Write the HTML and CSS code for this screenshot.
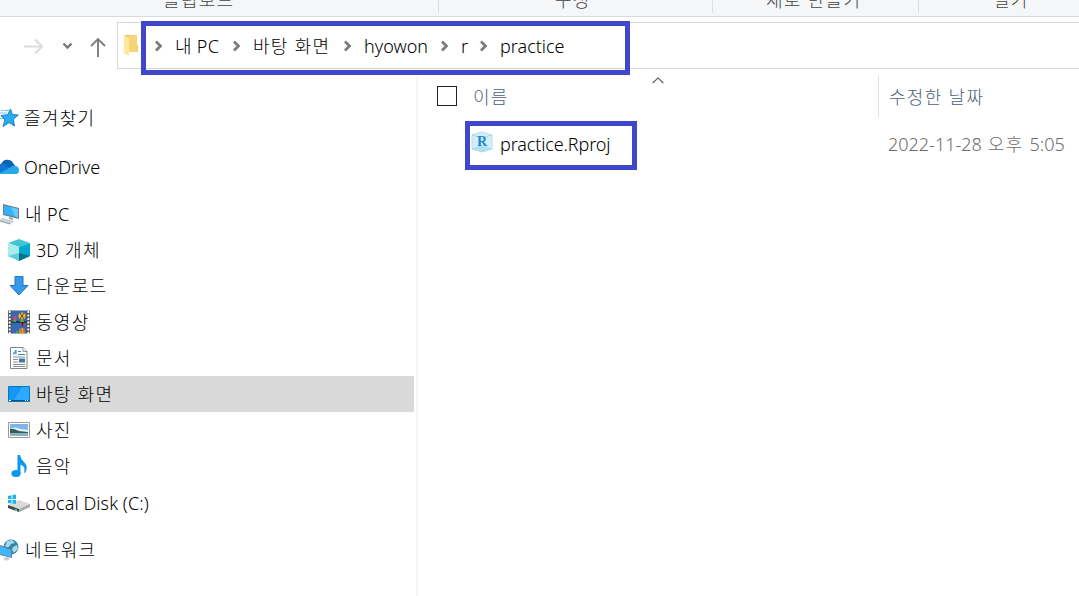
FILE: index.html
```html
<!DOCTYPE html>
<html lang="ko">
<head>
<meta charset="utf-8">
<title>practice</title>
<link rel="stylesheet" href="styles.css">
</head>
<body>
<div class="window">
  <header class="ribbon">
    <div class="group clip"><span class="ko">클립보드</span></div>
    <div class="group organize"><span class="ko">구성</span></div>
    <div class="group create"><span class="ko">새로 만들기</span></div>
    <div class="group open"><span class="ko">열기</span></div>
  </header>
  <nav class="toolbar">
    <svg class="nav" width="117" height="48" viewBox="0 0 117 48" fill="none">
      <path d="M24 24.500H42M35 17.500l7 7-7 7" stroke="#dcdcdc" stroke-width="2.200"/>
      <path d="M63.500 21.500l4 4 4-4" stroke="#777" stroke-width="2.400"/>
      <path d="M98 35V17M91 24l7-7 7 7" stroke="#7d7d7d" stroke-width="1.900"/>
    </svg>
    <div class="address">
      <svg class="folder" width="15" height="22" viewBox="0 0 15 22"><path d="M0 1h13v10h1v7H3z" fill="#efc866"/><path d="M5 1h8v17H5z" fill="#f6d477"/><path d="M0 1l5 3v18l-5-3z" fill="#ffe79e"/></svg>
      <div class="crumbs">
        <svg class="chev" viewBox="0 0 9 12"><path d="M2 1.500L6.500 6 2 10.500"/></svg><span class="c1">내 PC</span>
        <svg class="chev" viewBox="0 0 9 12"><path d="M2 1.500L6.500 6 2 10.500"/></svg><span class="c2 ko">바탕 화면</span>
        <svg class="chev" viewBox="0 0 9 12"><path d="M2 1.500L6.500 6 2 10.500"/></svg><span class="c3">hyowon</span>
        <svg class="chev" viewBox="0 0 9 12"><path d="M2 1.500L6.500 6 2 10.500"/></svg><span class="c4">r</span>
        <svg class="chev" viewBox="0 0 9 12"><path d="M2 1.500L6.500 6 2 10.500"/></svg><span class="c5">practice</span>
      </div>
    </div>
  </nav>
  <div class="content">
    <aside class="sidebar">
      <div class="row root fav"><svg width="19" height="22" viewBox="0 0 19 22"><path d="M10.500 2l1.800 5.500 6 .5-5 4.300 1.200 6.700-5.300-3.400L3 19.500l2-6.500L1 8.500l6.800-.8z" fill="#29aaf3" stroke="#1683c9"/><path d="M1 3.500h8M0 6h7M0 11.500h3" stroke="#73c5f3"/></svg><span class="ko">즐겨찾기</span></div>
      <div class="row root one"><svg width="19" height="18" viewBox="0 0 19 18"><path d="M1 7a6.500 6.500 0 0 1 12-2l3 4-8 4z" fill="#0864b8"/><path d="M0 6q4-1 8 3l6 4-14 3z" fill="#0f78d4"/><path d="M0 15l11-6q2-2 5-1 3 1 3 4 0 4-3 4H0z" fill="#28a8ea"/></svg><span class="tight">OneDrive</span></div>
      <div class="row root pc"><svg width="19" height="22" viewBox="0 0 19 22"><path d="M3 1l16 4v11L3 12z" fill="#687f91"/><path d="M4 2.500l14 3.500v8.500L4 11z" fill="#35b2fa"/><path d="M11 4l7 2v8.500l-3-1z" fill="#68c9ff"/><path d="M9 14l4 1v2l-4-1z" fill="#9aa7b0"/><path d="M0 16l3-1 11 3-3 3L0 18z" fill="#cbd3d8"/><path d="M0 18l10 3" stroke="#8b989f"/></svg><span class="mixed-pc">내 PC</span></div>
      <div class="row"><svg width="22" height="22" viewBox="0 0 22 22"><path d="M0 4L11 0l11 4-11 4z" fill="#43c4d1"/><path d="M0 4l11 4v14L0 17z" fill="#a9edef"/><path d="M11 8l11-4v13l-11 5z" fill="#04a9cf"/><path d="M11 14l11 3-11 5z" fill="#08728b"/><path d="M0 17l11-3v8z" fill="#5fced8"/></svg><span>3D<span class="ko"> 개체</span></span></div>
      <div class="row"><svg width="22" height="22" viewBox="0 0 22 22"><path d="M7 1.500h8v9h5l-9 9.500-9-9.500h5z" fill="#3998e9" stroke="#1979cc"/></svg><span class="ko">다운로드</span></div>
      <div class="row"><svg width="22" height="24" viewBox="0 0 22 24"><path d="M0 .5h22v23H0z" fill="#555"/><path d="M3.500 1h15v10.500h-15zM3.500 12.500h15V23h-15z" fill="#3269bd"/><path d="M3.500 12h15" stroke="#111"/><path d="M1.700 1v23M20.300 1v23" stroke="#fff" stroke-width="1.800" stroke-dasharray="2 1.500"/><circle cx="14" cy="6" r="3.500" fill="#ecbf26"/><path d="M12 3l4 6m0-6l-4 6" stroke="#7b3c2a"/><circle cx="7" cy="8" r="2" fill="#d94b55"/><path d="M5 11h3M12 11h4M8 22h2" stroke="#52a14c" stroke-width="2"/><path d="M11.500 13h6l-3 4z" fill="#c94838"/><path d="M13.500 13h2l-1 4z" fill="#222"/><circle cx="14" cy="21" r="3" fill="#e5a929"/><path d="M13 18.500v4m3-4v4" stroke="#bb3a40"/></svg><span class="ko">동영상</span></div>
      <div class="row"><svg width="22" height="22" viewBox="0 0 22 22"><path d="M2.500.5H15l4 4v17H2.500z" fill="#fff" stroke="#858585"/><path d="M15 .5v4h4" fill="#eee" stroke="#999"/><path d="M5 7.500L8 3v4.500M5.500 6H8M10 4.500h3M10 7.500h7" stroke="#288bc8" fill="none"/><path d="M5 10h12M5 12.500h5M5 15h5M5 17.500h12M5 19.500h12" stroke="#87929a"/><path d="M11 11.500h6v4h-6z" fill="#4578a5"/></svg><span class="ko">문서</span></div>
      <div class="row selected"><svg width="22" height="16" viewBox="0 0 22 16"><path d="M.5.5h21v15H.5z" fill="#1598f3" stroke="#0878bd"/><path d="M14 1h7v13H6z" fill="#2da9ff"/><path d="M1 14.500h20" stroke="#064e82"/><path d="M1 14.500h2M17 14.500h1M19 14.500h1" stroke="#fff"/></svg><span class="ko">바탕 화면</span></div>
      <div class="row"><svg width="22" height="16" viewBox="0 0 22 16"><path d="M.5.5h21v15H.5z" fill="#fff" stroke="#9a9a9a"/><path d="M2 2h18v12H2z" fill="#7eb5e9"/><path d="M2 7q6-3 10 0l8 1v2H2z" fill="#e4f1f7"/><path d="M2 7l4 0 5 2 9 1v2H2z" fill="#315f5d"/><path d="M2 11h18v3H2z" fill="#8aafbd"/></svg><span class="ko">사진</span></div>
      <div class="row"><svg width="22" height="22" viewBox="0 0 22 22"><ellipse cx="8" cy="18.500" rx="4.600" ry="3.500" fill="#0997ef"/><path d="M9.500 18.500V0h2.500q.5 4 4 7 5 5 1 11l-1-.5q2-6-3.500-8v9z" fill="#0997ef"/></svg><span class="ko">음악</span></div>
      <div class="row disk"><svg width="22" height="20" viewBox="0 0 22 20"><path d="M0 12l11-5 11 4-11 5z" fill="#d9d9d9"/><path d="M0 12l11 4v3L0 15z" fill="#434546"/><path d="M11 16l11-5v3l-11 5z" fill="#a7a7a7"/><path d="M7 16.500l2 .7" stroke="#44ec6e" stroke-width="1.500"/><path d="M0 3l3.500-.7V6H0zM4.500 2L8 1.500V6H4.500zM0 7h3.500v3.500L0 10zM4.500 7H8v4l-3.500-.4z" fill="#16b5f1"/></svg><span class="loose">Local Disk (C:)</span></div>
      <div class="row root network"><svg width="19" height="22" viewBox="0 0 19 22"><circle cx="11" cy="8" r="7.500" fill="#3284ad"/><path d="M7 2l5-1 3 3-4 1-2 3-4 0zM13 8l4-2 1 4-4 4-2-3z" fill="#a5d9e8"/><path d="M0 6l12 4v9L0 16z" fill="#607d94"/><path d="M0 7l11 4v7L0 15z" fill="#42b5ff"/><path d="M3 19l5-1 2 2-4 2z" fill="#c7cdd1"/></svg><span class="ko">네트워크</span></div>
    </aside>
    <main class="files">
      <div class="heads"><div class="name-head"><i class="check"></i><span class="ko">이름</span><svg class="sort" width="12" height="7" viewBox="0 0 12 7"><path d="M.7 6L6 .9 11.300 6" fill="none" stroke="#555" stroke-width="1.100"/></svg></div><div class="date-head"><span class="ko">수정한 날짜</span></div></div>
      <div class="file"><div class="file-name"><svg width="22" height="22" viewBox="0 0 22 22"><path d="M1 4l10-3 10 3v14l-10 3-10-3z" fill="#d4edf7" stroke="#b7dcea"/><path d="M1 4l10 3 10-3M11 15v6M1 18l10-3 10 3" fill="none" stroke="#a8dbed"/><path d="M11 15l10 3-10 3-10-3z" fill="#afe0f1"/><text x="6" y="14.500" class="r-mark">R</text></svg><span class="tight">practice.Rproj</span></div><span class="date">2022-11-28<span class="ko"> 오후 </span>5:05</span></div>
    </main>
  </div>
  <div class="mark path-mark"></div>
  <div class="mark file-mark"></div>
</div>
</body>
</html>
```
FILE: styles.css
```css
* { box-sizing: border-box; }
body { margin: 0; background: #fff; color: #000; font: 300 18px/24px "Noto Sans", "Noto Sans CJK KR", sans-serif; overflow: hidden; }
svg { display: block; flex: none; }
span { white-space: nowrap; }
.ko { letter-spacing: 1.3px; }
.tight { letter-spacing: -.12px; }
.loose { letter-spacing: .08px; }
.mixed-pc { letter-spacing: .4px; }
.window { position: relative; width: 1079px; height: 596px; overflow: hidden; display: flex; flex-direction: column; }
.ribbon { height: 17px; flex: none; display: flex; background: #f5f6f7; border-bottom: 1px solid #d9dadb; color: #444; overflow: hidden; }
.group { height: 13px; border-right: 1px solid #dddedf; flex: none; }
.group span { display: block; margin-top: -12px; }
.clip { width: 439px; padding-left: 163px; }
.organize { width: 274px; padding-left: 116px; }
.create { width: 206px; padding-left: 53px; }
.open { width: 160px; padding-left: 74px; border: 0; }
.toolbar { height: 59px; flex: none; display: flex; padding-top: 5px; }
.nav { flex: none; }
.address { width: 962px; height: 47px; border: 1px solid #d9d9d9; border-right: 0; display: flex; padding-left: 6px; }
.folder { margin-top: 11px; }
.crumbs { display: flex; align-items: center; height: 46px; margin-left: 15px; }
.chev { width: 9px; height: 12px; fill: none; stroke: #7b7b7b; stroke-width: 2.7; }
.crumbs span { padding-left: 12px; margin-top: -1px; }
.c1 { width: 69px; letter-spacing: .3px; }
.c2 { width: 102px; }
.c3 { width: 88px; }
.c4 { width: 30px; }
.content { flex: 1; display: flex; }
.sidebar { width: 418px; border-right: 2px solid #f5f5f5; padding-top: 24px; }
.row { width: 414px; height: 36px; flex: none; display: flex; align-items: center; padding-left: 8px; gap: 6px; }
.root { padding-left: 0; gap: 5px; }
.fav { margin-bottom: 13px; }
.one { margin-bottom: 11px; }
.pc { gap: 6px; }
.selected { background: #d9d9d9; }
.disk { margin-top: 1px; }
.network { margin-top: 11px; gap: 6px; }
.files { flex: 1; }
.heads { height: 41px; display: flex; color: #4c607a; }
.name-head { position: relative; width: 461px; border-right: 1px solid #e1e1e1; display: flex; align-items: center; padding-left: 19px; gap: 16px; }
.check { width: 20px; height: 20px; margin-bottom: 1px; border: 1px solid #222; }
.sort { position: absolute; left: 234px; top: 1px; }
.date-head { padding: 9px 0 0 10px; }
.file { display: flex; align-items: center; height: 54px; }
.file-name { width: 470px; display: flex; align-items: center; padding-left: 53px; gap: 7px; }
.file-name svg { margin-top: -5px; }
.r-mark { font: bold 14px "Liberation Serif", serif; fill: #168bd0; }
.date { color: #6d6d6d; }
.mark { position: absolute; border: 5px solid #3f48cc; }
.path-mark { left: 141px; top: 21px; width: 489px; height: 54px; }
.file-mark { left: 465px; top: 121px; width: 172px; height: 49px; }
```
